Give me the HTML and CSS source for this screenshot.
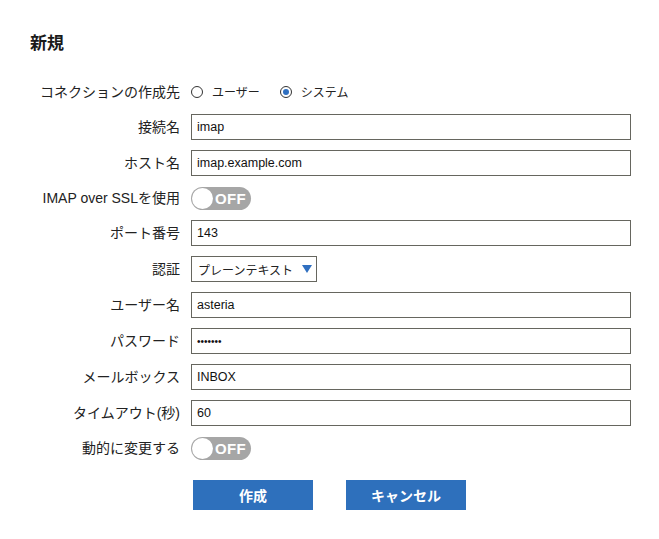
FILE: index.html
```html
<!DOCTYPE html>
<html lang="ja">
<head>
<meta charset="utf-8">
<title>新規</title>
<link rel="stylesheet" href="styles.css">
</head>
<body>
<div class="page">
  <h1 class="title">新規</h1>
  <form class="form">
    <div class="row row-radio">
      <div class="label">コネクションの作成先</div>
      <div class="field radios">
        <span class="radio"><span class="dot"></span><span class="rtext">ユーザー</span></span>
        <span class="radio checked"><span class="dot"></span><span class="rtext">システム</span></span>
      </div>
    </div>
    <div class="row">
      <div class="label">接続名</div>
      <div class="field"><input class="input" type="text" value="imap"></div>
    </div>
    <div class="row">
      <div class="label">ホスト名</div>
      <div class="field"><input class="input" type="text" value="imap.example.com"></div>
    </div>
    <div class="row row-toggle">
      <div class="label">IMAP over SSLを使用</div>
      <div class="field"><span class="toggle"><span class="knob"></span><span class="ttext">OFF</span></span></div>
    </div>
    <div class="row">
      <div class="label">ポート番号</div>
      <div class="field"><input class="input" type="text" value="143"></div>
    </div>
    <div class="row">
      <div class="label">認証</div>
      <div class="field">
        <div class="select"><span class="stext">プレーンテキスト</span>
          <svg class="caret" width="10" height="8" viewBox="0 0 10 8"><path d="M0 0 L10 0 L5 8 Z" fill="#2f6fc0"/></svg>
        </div>
      </div>
    </div>
    <div class="row">
      <div class="label">ユーザー名</div>
      <div class="field"><input class="input" type="text" value="asteria"></div>
    </div>
    <div class="row">
      <div class="label">パスワード</div>
      <div class="field"><input class="input pw" type="password" value="asteria"></div>
    </div>
    <div class="row">
      <div class="label">メールボックス</div>
      <div class="field"><input class="input" type="text" value="INBOX"></div>
    </div>
    <div class="row">
      <div class="label">タイムアウト(秒)</div>
      <div class="field"><input class="input" type="text" value="60"></div>
    </div>
    <div class="row row-toggle">
      <div class="label">動的に変更する</div>
      <div class="field"><span class="toggle"><span class="knob"></span><span class="ttext">OFF</span></span></div>
    </div>
    <div class="row row-buttons">
      <div class="label"></div>
      <div class="field buttons">
        <button type="button" class="btn">作成</button>
        <button type="button" class="btn">キャンセル</button>
      </div>
    </div>
  </form>
</div>
</body>
</html>
```
FILE: styles.css
```css
html, body {
  margin: 0;
  padding: 0;
  background: #ffffff;
}
body {
  font-family: "Liberation Sans", "Noto Sans CJK JP", sans-serif;
  color: #1e1e1e;
}
.page {
  padding: 32px 0 0 30px;
}
.title {
  margin: 0;
  font-size: 17px;
  line-height: 24px;
  font-weight: bold;
  color: #1a1a1a;
}
.form {
  margin-top: 23px;
  display: flex;
  flex-direction: column;
  gap: 10px;
}
.row {
  display: flex;
  align-items: center;
  gap: 11px;
  height: 26px;
}
.row-radio {
  height: 25px;
}
.row-toggle {
  height: 24px;
}
.row-buttons {
  height: 30px;
  margin-top: 10px;
}
.label {
  width: 150px;
  flex: none;
  text-align: right;
  font-size: 14px;
  line-height: 20px;
  color: #222;
  white-space: nowrap;
}
.field {
  display: flex;
  align-items: center;
}
.input {
  box-sizing: border-box;
  width: 440px;
  height: 26px;
  margin: 0;
  padding: 0 5px;
  border: 1px solid #66665f;
  border-radius: 0;
  font-family: "Liberation Sans", "Noto Sans CJK JP", sans-serif;
  font-size: 12.5px;
  color: #111;
  background: #fff;
  outline: none;
}
.pw {
  font-size: 10px;
  letter-spacing: 0;
}
.radios {
  gap: 20px;
  font-size: 12px;
}
.radio {
  display: flex;
  align-items: center;
  gap: 9px;
}
.dot {
  box-sizing: border-box;
  width: 12px;
  height: 12px;
  border: 1px solid #333;
  border-radius: 50%;
  background: #fff;
  display: flex;
  align-items: center;
  justify-content: center;
}
.checked .dot::after {
  content: "";
  width: 6px;
  height: 6px;
  border-radius: 50%;
  background: #2f6fc0;
}
.rtext {
  font-size: 12px;
  color: #222;
}
.toggle {
  box-sizing: border-box;
  width: 60px;
  height: 23px;
  border-radius: 12px;
  background: #a6a6a6;
  display: flex;
  align-items: center;
  padding-left: 1px;
}
.knob {
  width: 21px;
  height: 21px;
  border-radius: 50%;
  background: #fff;
  flex: none;
}
.ttext {
  margin-left: 2px;
  color: #fff;
  font-weight: bold;
  font-size: 15px;
  letter-spacing: 0.3px;
  font-family: "Liberation Sans", sans-serif;
}
.select {
  box-sizing: border-box;
  width: 126px;
  height: 26px;
  border: 1px solid #66665f;
  display: flex;
  align-items: center;
  padding-left: 6px;
  gap: 9px;
  background: #fff;
}
.stext {
  font-size: 12px;
  color: #222;
  white-space: nowrap;
}
.caret {
  display: block;
}
.buttons {
  gap: 33px;
  padding-left: 2px;
}
.btn {
  width: 120px;
  height: 30px;
  border: none;
  border-radius: 0;
  background: #2e70bc;
  color: #fff;
  font-family: "Noto Sans CJK JP", sans-serif;
  font-weight: bold;
  font-size: 14px;
  padding: 0;
}
```
